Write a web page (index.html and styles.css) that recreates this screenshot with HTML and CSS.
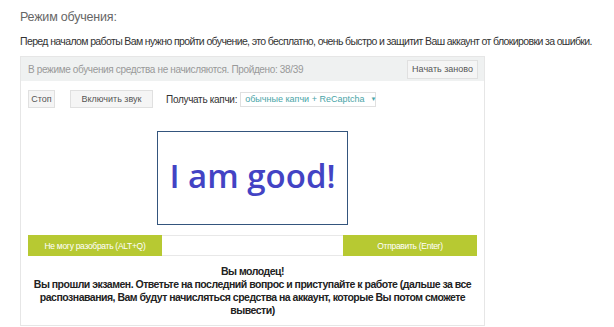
FILE: index.html
```html
<!DOCTYPE html>
<html lang="ru">
<head>
    <meta charset="UTF-8">
    <title>Режим обучения</title>
    <link rel="stylesheet" href="styles.css">
</head>
<body>
    <div class="page">
        <h2 class="title">Режим обучения:</h2>
        <p class="intro">Перед началом работы Вам нужно пройти обучение, это бесплатно, очень быстро и защитит Ваш аккаунт от блокировки за ошибки.</p>

        <div class="panel">
            <div class="panel-head">
                <span class="progress">В режиме обучения средства не начисляются. Пройдено: 38/39</span>
                <button class="btn">Начать заново</button>
            </div>

            <div class="panel-body">
                <div class="controls">
                    <button class="btn btn-stop">Стоп</button>
                    <button class="btn btn-sound">Включить звук</button>
                    <span class="label">Получать капчи:</span>
                    <div class="select">обычные капчи + ReCaptcha <span class="caret">&#9660;</span></div>
                </div>

                <div class="captcha">I am good!</div>

                <div class="answer-row">
                    <button class="btn-green">Не могу разобрать (ALT+Q)</button>
                    <input class="answer" type="text">
                    <button class="btn-green">Отправить (Enter)</button>
                </div>

                <div class="result">
                    Вы молодец!<br>
                    Вы прошли экзамен. Ответьте на последний вопрос и приступайте к работе (дальше за все распознавания, Вам будут начисляться средства на аккаунт, которые Вы потом сможете вывести)
                </div>
            </div>
        </div>
    </div>
</body>
</html>
```

FILE: styles.css
```css
* {
    margin: 0;
    padding: 0;
    box-sizing: border-box;
}

body {
    font-family: "Liberation Sans", Arial, sans-serif;
    background: #fff;
    color: #333;
}

.page {
    padding: 8px 0 0 20px;
}

.title {
    font-size: 12.5px;
    font-weight: normal;
    color: #666;
    line-height: 18px;
    letter-spacing: -0.2px;
}

.intro {
    font-size: 10.5px;
    line-height: 14px;
    margin-top: 8px;
    color: #333;
    letter-spacing: -0.62px;
    white-space: nowrap;
}

.panel {
    width: 465px;
    margin-top: 8px;
    border: 1px solid #e6e6e6;
    height: 270px;
}

.panel-head {
    display: flex;
    align-items: center;
    justify-content: space-between;
    height: 24px;
    padding: 0 6px 0 7px;
    background: #eff1f1;
}

.progress {
    font-size: 10px;
    color: #999;
    letter-spacing: -0.35px;
}

.btn {
    font-family: inherit;
    font-size: 9px;
    color: #555;
    background: #f5f5f5;
    border: 1px solid #e0e0e0;
    height: 19px;
    padding: 0 4px;
    cursor: pointer;
}

.panel-body {
    padding: 9px 7px 0 7px;
}

.controls {
    display: flex;
    align-items: center;
    height: 18px;
}

.btn-stop {
    width: 27px;
    height: 18px;
    padding: 0;
}

.btn-sound {
    width: 83px;
    height: 18px;
    margin-left: 15px;
}

.label {
    font-size: 10px;
    color: #333;
    margin-left: 13px;
    letter-spacing: -0.3px;
}

.select {
    display: flex;
    align-items: center;
    margin-left: 3px;
    width: 136px;
    height: 15px;
    border: 1px solid #e0e0e0;
    padding: 0 4px;
    font-size: 9px;
    color: #4aa5a8;
    white-space: nowrap;
}

.caret {
    font-size: 6px;
    margin-left: 6px;
}

.captcha {
    width: 191px;
    height: 94px;
    margin: 23px auto 0 auto;
    border: 1px solid #34557d;
    display: flex;
    align-items: center;
    justify-content: center;
    font-family: "Open Sans", "Noto Sans", sans-serif;
    font-size: 33px;
    font-weight: 600;
    color: #4343c4;
    padding-bottom: 6px;
}

.answer-row {
    display: flex;
    height: 21px;
    margin-top: 10px;
}

.btn-green {
    width: 134px;
    border: none;
    background: #b7c932;
    color: #fff;
    font-family: inherit;
    font-size: 8.5px;
    letter-spacing: -0.3px;
    cursor: pointer;
}

.answer {
    flex: 1;
    border: 1px solid #e8e8e8;
    border-left: none;
    border-right: none;
    outline: none;
}

.result {
    margin: 9px auto 0 auto;
    width: 445px;
    text-align: center;
    font-size: 10.5px;
    font-weight: bold;
    line-height: 13px;
    letter-spacing: -0.5px;
    color: #222;
}
```
